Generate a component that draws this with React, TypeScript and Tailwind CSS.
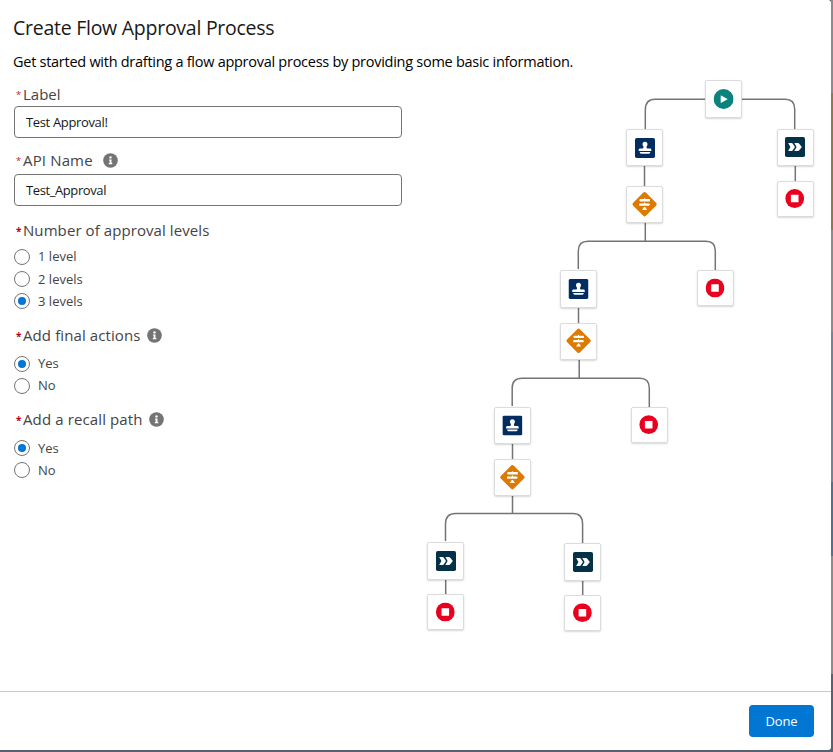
import React from "react";

type NodeKind = "start" | "stamp" | "decision" | "steps" | "end";

function Glyph({ kind }: { kind: NodeKind }) {
  switch (kind) {
    case "start":
      return (
        <svg width="20" height="20" viewBox="0 0 20 20">
          <circle cx="10" cy="10" r="10" fill="#0b827c" />
          <path d="M7.6 6.4L13.9 9.9Q14.2 10.1 13.9 10.3L7.6 13.8Q7.1 14 7.1 13.5V6.7Q7.1 6.2 7.6 6.4Z" fill="#fff" />
        </svg>
      );
    case "stamp":
      return (
        <svg width="20" height="20" viewBox="0 0 20 20">
          <rect width="20" height="20" rx="1.8" fill="#032d60" />
          <path
            d="M10 3.7a2.5 2.5 0 0 1 2.5 2.5c0 1.4-1 1.7-1 3 0 .9.5 1.4 1.5 1.4h2c.8 0 1.3.6 1.3 1.3v1H3.7v-1c0-.7.5-1.3 1.3-1.3h2c1 0 1.5-.5 1.5-1.4 0-1.3-1-1.6-1-3A2.5 2.5 0 0 1 10 3.7Z"
            fill="#fff"
          />
          <path d="M4.8 14.1H15.2C15.2 15.1 14.7 15.7 13.9 15.7H6.1C5.3 15.7 4.8 15.1 4.8 14.1Z" fill="#fff" />
        </svg>
      );
    case "decision":
      return (
        <svg width="26" height="26" viewBox="0 0 26 26">
          <rect x="3.9" y="3.9" width="18.2" height="18.2" rx="1.8" transform="rotate(45 13 13)" fill="#dd7a01" />
          <path d="M12.5 7H13.5V7.9H17.9Q18.4 7.9 18.4 8.4V9.7Q18.4 10.2 17.9 10.2H8.600L7.500 9.050 8.600 7.900H12.500Z" fill="#fff" />
          <path d="M12.500 11.200H13.500V12.200H17.400L18.500 13.350 17.400 14.500H8.100Q7.600 14.500 7.600 14V12.700Q7.600 12.200 8.100 12.200H12.500Z" fill="#fff" />
          <path d="M12.500 15.800H13.500L15.200 18.100Q15.500 18.700 14.900 18.700H11.100Q10.500 18.700 10.800 18.100Z" fill="#fff" />
        </svg>
      );
    case "steps":
      return (
        <svg width="20" height="20" viewBox="0 0 20 20">
          <rect width="20" height="20" rx="1.8" fill="#033248" />
          <path d="M3.2 6.1H6.8Q7.3 6.1 7.6 6.5L9.7 9.6Q10 10 9.7 10.4L7.6 13.6Q7.3 14 6.8 14H3.2L5.4 10Z" fill="#fff" />
          <path d="M9.3 6.1H13.2Q13.7 6.1 14 6.5L16.5 9.6Q16.8 10 16.5 10.4L14 13.6Q13.7 14 13.2 14H9.3L11.6 10Z" fill="#fff" />
        </svg>
      );
    case "end":
      return (
        <svg width="19" height="19" viewBox="0 0 19 19">
          <circle cx="9.5" cy="9.5" r="9.4" fill="#ea001e" />
          <rect x="5.7" y="5.8" width="7.6" height="7.5" rx=".5" fill="#fff" />
        </svg>
      );
  }
}

interface FlowNode {
  kind: NodeKind;
  left: number;
  top: number;
  height: number;
  cx: number;
  cy: number;
}

const nodes: FlowNode[] = [
  { kind: "start", left: 705, top: 80, height: 38, cx: 723.6, cy: 99 },
  { kind: "stamp", left: 626, top: 129, height: 37, cx: 645, cy: 148 },
  { kind: "steps", left: 777, top: 129, height: 37, cx: 795, cy: 147 },
  { kind: "decision", left: 626, top: 186, height: 37, cx: 644.6, cy: 204.2 },
  { kind: "end", left: 777, top: 181, height: 36, cx: 794.7, cy: 198.5 },
  { kind: "stamp", left: 560, top: 270, height: 38, cx: 578.5, cy: 289 },
  { kind: "end", left: 697, top: 270, height: 36, cx: 715, cy: 288 },
  { kind: "decision", left: 560, top: 323, height: 37, cx: 578.6, cy: 340.8 },
  { kind: "stamp", left: 494, top: 407, height: 37, cx: 512.4, cy: 425.5 },
  { kind: "end", left: 631, top: 407, height: 36, cx: 648.7, cy: 424.6 },
  { kind: "decision", left: 494, top: 459, height: 37, cx: 512.4, cy: 477.2 },
  { kind: "steps", left: 427, top: 542, height: 38, cx: 446, cy: 561 },
  { kind: "steps", left: 564, top: 543, height: 38, cx: 583, cy: 562 },
  { kind: "end", left: 427, top: 594, height: 36, cx: 445.3, cy: 612 },
  { kind: "end", left: 564, top: 595, height: 36, cx: 582.4, cy: 612.7 },
];

function Diagram() {
  return (
    <div className="pointer-events-none absolute inset-0">
      <svg className="absolute inset-0" width="831" height="690" fill="none" stroke="#747474" strokeWidth="1.5">
        <path d="M705 99.3H655.3Q645.3 99.3 645.3 110V129M742 99.3H785Q794.7 99.3 794.7 109V129" />
        <path d="M644.5 166V186M795.3 166V181M645.3 223V241.3" />
        <path d="M578.3 269V251Q578.3 241.3 588 241.3H706Q715.3 241.3 715.3 251V270" />
        <path d="M578.5 307V323M579.2 360V378" />
        <path d="M512.2 406V388Q512.2 378.2 522 378.2H640Q649.3 378.2 649.3 388V407" />
        <path d="M512.5 444V459M512.5 496V513.5" />
        <path d="M445.5 541V524Q445.5 513.5 455.5 513.5H573Q582.6 513.5 582.6 524V543" />
        <path d="M445.7 580V594M582.7 581V595" />
      </svg>
      {nodes.map((n) => (
        <React.Fragment key={`${n.left}-${n.top}`}>
          <div
            className="absolute w-[37px] rounded-[2px] border border-[#dcdcdc] bg-white shadow-[0_1px_2px_rgba(0,0,0,0.16)]"
            style={{ left: n.left, top: n.top, height: n.height }}
          />
          <div
            className="absolute top-0 left-0"
            style={{ transform: `translate(${n.cx}px, ${n.cy}px) translate(-50%, -50%)` }}
          >
            <Glyph kind={n.kind} />
          </div>
        </React.Fragment>
      ))}
    </div>
  );
}

function Info({ className }: { className: string }) {
  return (
    <svg className={className} width="15" height="15" viewBox="0 0 15 15">
      <circle cx="7.5" cy="7.5" r="7.3" fill="#747474" />
      <circle cx="7.5" cy="4.4" r="1.2" fill="#fff" />
      <path d="M6 6.4H8.5V10.1H9.3V11.2H5.8V10.1H6.6V7.5H6Z" fill="#fff" />
    </svg>
  );
}

function Star({ bold = false }: { bold?: boolean }) {
  return (
    <span
      className={
        bold
          ? "w-[9px] pt-[2px] pl-[2px] text-[10px] font-bold tracking-normal text-[#ba0517]"
          : "w-[9px] pt-[2px] pl-[2px] text-[9.5px] tracking-normal text-[#cc1730]"
      }
    >
      *
    </span>
  );
}

function Radio({ label, checked = false, raised = false }: { label: string; checked?: boolean; raised?: boolean }) {
  return (
    <label className="flex h-[22px] items-center">
      <span className="flex size-4 items-center justify-center rounded-full border border-[#747474] bg-white">
        {checked && <span className="size-2 rounded-full bg-[#0176d3]" />}
      </span>
      <span
        className={`ml-2 text-[13px] leading-5 tracking-[0.02px] text-[#444] ${raised ? "mb-[2px]" : "mb-0"}`}
      >
        {label}
      </span>
    </label>
  );
}

export default function App() {
  return (
    <div className="flex h-[752px] w-[833px] overflow-hidden bg-[#566171] font-['Open_Sans','Noto_Sans',sans-serif]">
      <div className="relative flex h-[750px] w-[831px] flex-col rounded-tr-[3px] rounded-br-[3px] bg-white">
        <main className="flex h-[691px] flex-col items-start pl-[14px]">
          <h1 className="-ml-px mt-[13px] h-[30px] whitespace-nowrap text-[19.5px] leading-[30px] tracking-[-0.26px] text-[#181818]">
            Create Flow Approval Process
          </h1>
          <p className="-ml-px mt-[8px] h-[22px] whitespace-nowrap text-[14.5px] leading-[22px] tracking-[-0.27px] text-black">
            Get started with drafting a flow approval process by providing some basic information.
          </p>
          <div className="mt-[10px] flex h-[22px] items-center text-[15px] text-[#444]">
            <Star />Label
          </div>
          <input
            className="mt-[1px] h-8 w-[388px] rounded-[4px] border border-[#747474] px-[11px] text-[13px] tracking-[-0.35px] text-[#181818]"
            defaultValue="Test Approval!"
          />
          <div className="mt-[11px] flex h-[22px] items-center text-[15px] tracking-[0.15px] text-[#444]">
            <Star />API Name<Info className="ml-[10px]" />
          </div>
          <input
            className="mt-[3px] h-8 w-[388px] rounded-[4px] border border-[#747474] px-[11px] text-[13px] tracking-[-0.4px] text-[#181818]"
            defaultValue="Test_Approval"
          />
          <div className="mt-[13px] flex h-[22px] items-center text-[15px] tracking-[0.08px] text-[#444]">
            <Star bold />Number of approval levels
          </div>
          <div className="mt-[5px] flex flex-col">
            <Radio label="1 level" raised />
            <Radio label="2 levels" />
            <Radio label="3 levels" checked />
          </div>
          <div className="mt-[12px] flex h-[22px] items-center text-[15px] tracking-[0.1px] text-[#444]">
            <Star bold />Add final actions<Info className="ml-[6px]" />
          </div>
          <div className="mt-[7px] flex flex-col">
            <Radio label="Yes" checked raised />
            <Radio label="No" raised />
          </div>
          <div className="mt-[11px] flex h-[22px] items-center text-[15px] tracking-[0.12px] text-[#444]">
            <Star bold />Add a recall path<Info className="ml-[6px]" />
          </div>
          <div className="mt-[7px] flex flex-col">
            <Radio label="Yes" checked />
            <Radio label="No" />
          </div>
        </main>
        <Diagram />
        <footer className="flex h-[59px] items-center justify-end border-t border-[#c9c9c9] pr-[17px]">
          <button className="h-8 w-[65px] rounded-[4px] bg-[#0176d3] pt-[2px] text-[13px] tracking-[-0.1px] text-white">Done</button>
        </footer>
      </div>
      <div className="flex w-[2px] flex-col">
        <div className="h-[93px] bg-[#8b8b8d]" />
        <div className="h-[137px] bg-[#8b7a4c]" />
        <div className="h-[102px] bg-[#8b8b8b]" />
        <div className="h-[150px] bg-[#738496]" />
        <div className="h-[74px] bg-[#4f7290]" />
        <div className="h-[118px] bg-[#8b8b8b]" />
        <div className="h-[78px] bg-[#566171]" />
      </div>
    </div>
  );
}
